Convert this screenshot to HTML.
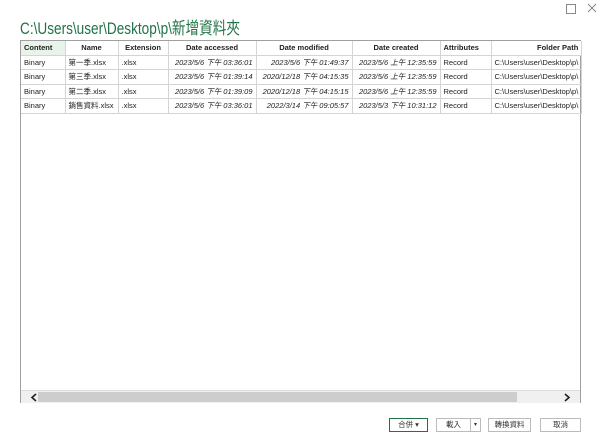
<!DOCTYPE html>
<html><head><style>
body{margin:0;width:600px;height:445px;background:#fff;font-family:"Liberation Sans","Noto Sans CJK TC",sans-serif;position:relative;overflow:hidden}
.t{position:absolute;left:20px;top:14px;font-size:17px;color:#217346;font-family:"Liberation Sans","Noto Sans CJK TC",sans-serif;transform:scaleX(0.8);transform-origin:0 0;white-space:nowrap}
.box{position:absolute;left:20px;top:40px;width:561px;height:363px;border:1px solid #a0a0a0;box-sizing:border-box}
table{position:absolute;left:21px;top:41px;border-collapse:collapse;font-size:7.5px;table-layout:fixed}
td,th{height:13.5px;padding:0 3px;border:1px solid #d4d4d4;white-space:nowrap;overflow:hidden;color:#222}
th{font-weight:bold;text-align:center;background:#fff;border-top:none}
th:first-child{background:#e8f3ea;text-align:left}
td:first-child,th:first-child{border-left:none}
td.i{font-style:italic;text-align:right}
.sb{position:absolute;left:21px;top:390px;width:559px;height:12px;background:#f0f0f0;border-top:1px solid #ddd}
.th{position:absolute;left:17px;top:1px;width:479px;height:10px;background:#cdcdcd}
.btn{position:absolute;top:418px;height:14px;border:1px solid #bbb;box-sizing:border-box;font-size:7.5px;text-align:center;line-height:12px;color:#333;background:#fff}
</style></head><body>
<div style="position:absolute;left:566px;top:4px;width:8px;height:8px;border:1px solid #888"></div>
<svg style="position:absolute;left:587px;top:3px" width="10" height="10"><path d="M1 1L9 9M9 1L1 9" stroke="#888" stroke-width="1"/></svg>
<div class="t">C:\Users\user\Desktop\p\新增資料夾</div>
<div class="box"></div>
<table>
<colgroup><col style="width:44px"><col style="width:53px"><col style="width:50px"><col style="width:88px"><col style="width:96px"><col style="width:88px"><col style="width:51px"><col style="width:90px"></colgroup>
<tr><th>Content</th><th>Name</th><th>Extension</th><th>Date accessed</th><th>Date modified</th><th>Date created</th><th style="text-align:left">Attributes</th><th style="text-align:right">Folder Path</th></tr>
<tr><td>Binary</td><td>第一季.xlsx</td><td>.xlsx</td><td class="i">2023/5/6 下午 03:36:01</td><td class="i">2023/5/6 下午 01:49:37</td><td class="i">2023/5/6 上午 12:35:59</td><td>Record</td><td>C:\Users\user\Desktop\p\</td></tr>
<tr><td>Binary</td><td>第三季.xlsx</td><td>.xlsx</td><td class="i">2023/5/6 下午 01:39:14</td><td class="i">2020/12/18 下午 04:15:35</td><td class="i">2023/5/6 上午 12:35:59</td><td>Record</td><td>C:\Users\user\Desktop\p\</td></tr>
<tr><td>Binary</td><td>第二季.xlsx</td><td>.xlsx</td><td class="i">2023/5/6 下午 01:39:09</td><td class="i">2020/12/18 下午 04:15:15</td><td class="i">2023/5/6 上午 12:35:59</td><td>Record</td><td>C:\Users\user\Desktop\p\</td></tr>
<tr><td>Binary</td><td>銷售資料.xlsx</td><td>.xlsx</td><td class="i">2023/5/6 下午 03:36:01</td><td class="i">2022/3/14 下午 09:05:57</td><td class="i">2023/5/3 下午 10:31:12</td><td>Record</td><td>C:\Users\user\Desktop\p\</td></tr>
</table>
<div class="sb"><div class="th"></div>
<svg style="position:absolute;left:9px;top:2px" width="8" height="9"><path d="M6 1L2 4.5L6 8" stroke="#222" stroke-width="1.6" fill="none"/></svg>
<svg style="position:absolute;left:542px;top:2px" width="8" height="9"><path d="M2 1L6 4.5L2 8" stroke="#222" stroke-width="1.6" fill="none"/></svg></div>
<div class="btn" style="left:389px;width:39px;border-color:#217346">合併 ▾</div>
<div class="btn" style="left:436px;width:35px">載入</div>
<div class="btn" style="left:470px;width:11px;font-size:6px">▾</div>
<div class="btn" style="left:488px;width:43px">轉換資料</div>
<div class="btn" style="left:540px;width:41px">取消</div>
</body></html>
